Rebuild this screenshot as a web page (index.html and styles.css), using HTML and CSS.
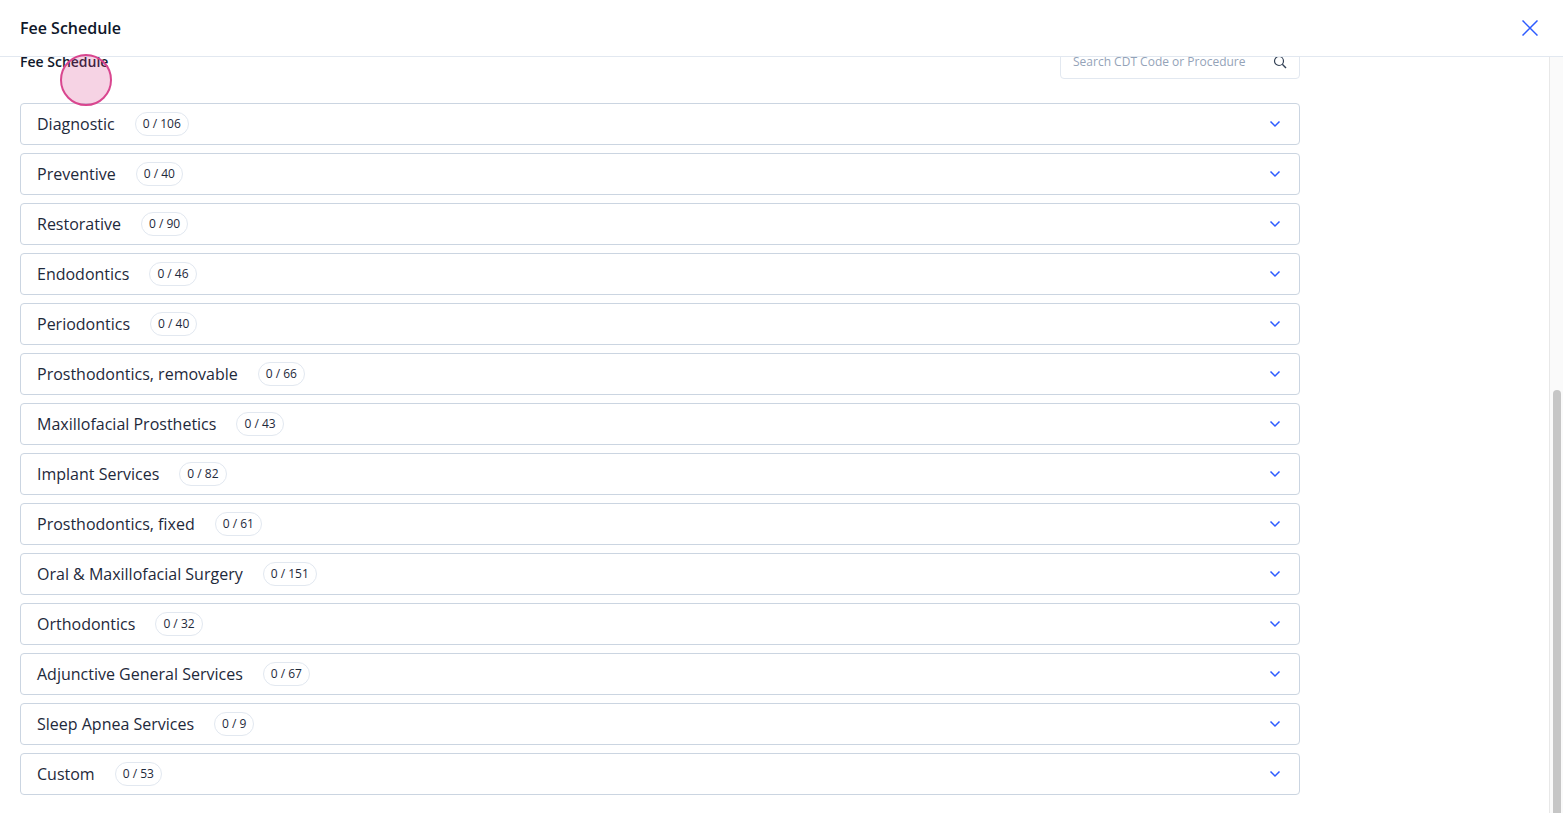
FILE: index.html
```
<!DOCTYPE html>
<html lang="en">
<head>
    <meta charset="UTF-8">
    <meta name="viewport" content="width=device-width, initial-scale=1.0">
    <title>Fee Schedule</title>
    <link rel="stylesheet" href="styles.css">
</head>
<body>
    <svg class="sprite" aria-hidden="true">
        <symbol id="chevron" viewBox="0 0 12 12">
            <path d="M1.5 3.5 L6 8 L10.5 3.5" fill="none" stroke="currentColor" stroke-width="1.5"/>
        </symbol>
    </svg>

    <header class="header">
        <h1>Fee Schedule</h1>
        <button type="button" class="close" aria-label="Close">
            <svg width="16" height="16" viewBox="0 0 16 16"><path d="M0.5 0.5 L15.5 15.5 M15.5 0.5 L0.5 15.5" stroke="currentColor" stroke-width="1.5"/></svg>
        </button>
    </header>

    <div class="body">
        <main class="content">
            <div class="toolbar">
                <h2>Fee Schedule</h2>
                <div class="search">
                    <input type="text" id="search" aria-label="Search CDT Code or Procedure" placeholder="Search CDT Code or Procedure">
                    <svg width="14" height="14" viewBox="0 0 14 14"><circle cx="6" cy="6" r="4.5" fill="none" stroke="currentColor" stroke-width="1.2"/><path d="M9.3 9.3 L13 13" stroke="currentColor" stroke-width="1.4"/></svg>
                </div>
            </div>

            <div class="list">
                <button type="button" class="row" aria-expanded="false"><span>Diagnostic</span><span class="count">0 / 106</span><svg class="chevron"><use href="#chevron"/></svg></button>
                <button type="button" class="row" aria-expanded="false"><span>Preventive</span><span class="count">0 / 40</span><svg class="chevron"><use href="#chevron"/></svg></button>
                <button type="button" class="row" aria-expanded="false"><span>Restorative</span><span class="count">0 / 90</span><svg class="chevron"><use href="#chevron"/></svg></button>
                <button type="button" class="row" aria-expanded="false"><span>Endodontics</span><span class="count">0 / 46</span><svg class="chevron"><use href="#chevron"/></svg></button>
                <button type="button" class="row" aria-expanded="false"><span>Periodontics</span><span class="count">0 / 40</span><svg class="chevron"><use href="#chevron"/></svg></button>
                <button type="button" class="row" aria-expanded="false"><span>Prosthodontics, removable</span><span class="count">0 / 66</span><svg class="chevron"><use href="#chevron"/></svg></button>
                <button type="button" class="row" aria-expanded="false"><span>Maxillofacial Prosthetics</span><span class="count">0 / 43</span><svg class="chevron"><use href="#chevron"/></svg></button>
                <button type="button" class="row" aria-expanded="false"><span>Implant Services</span><span class="count">0 / 82</span><svg class="chevron"><use href="#chevron"/></svg></button>
                <button type="button" class="row" aria-expanded="false"><span>Prosthodontics, fixed</span><span class="count">0 / 61</span><svg class="chevron"><use href="#chevron"/></svg></button>
                <button type="button" class="row" aria-expanded="false"><span>Oral &amp; Maxillofacial Surgery</span><span class="count">0 / 151</span><svg class="chevron"><use href="#chevron"/></svg></button>
                <button type="button" class="row" aria-expanded="false"><span>Orthodontics</span><span class="count">0 / 32</span><svg class="chevron"><use href="#chevron"/></svg></button>
                <button type="button" class="row" aria-expanded="false"><span>Adjunctive General Services</span><span class="count">0 / 67</span><svg class="chevron"><use href="#chevron"/></svg></button>
                <button type="button" class="row" aria-expanded="false"><span>Sleep Apnea Services</span><span class="count">0 / 9</span><svg class="chevron"><use href="#chevron"/></svg></button>
                <button type="button" class="row" aria-expanded="false"><span>Custom</span><span class="count">0 / 53</span><svg class="chevron"><use href="#chevron"/></svg></button>
            </div>
        </main>
        <div class="scrollbar" aria-hidden="true"><div class="thumb"></div></div>
    </div>

    <div class="pointer" aria-hidden="true"></div>
</body>
</html>
```
FILE: styles.css
```
* { box-sizing: border-box; }
body { display: flex; flex-direction: column; height: 100vh; margin: 0; overflow: hidden; background: #fff; color: #1e293b; font-family: "Open Sans", "Noto Sans", sans-serif; }
button, input { font-family: inherit; color: inherit; }
h1, h2 { margin: 0; font-weight: 600; color: #0f172a; }
h1 { font-size: 16px; line-height: 24px; }
h2 { font-size: 14px; line-height: 20px; }
.sprite { position: absolute; width: 0; height: 0; }

.header { display: flex; flex: none; align-items: center; justify-content: space-between; padding: 16px 20px; border-bottom: 1px solid #e2e8f0; }
.close { display: flex; padding: 4px 5px; border: none; background: none; color: #2d5bff; cursor: pointer; }

.body { display: flex; flex: 1; min-height: 0; }
/* scrolled to the end of the list */
.content { display: flex; flex: 1; flex-direction: column; justify-content: flex-end; gap: 24px; padding: 0 20px 18px; overflow: hidden; }
.toolbar, .list { width: 100%; max-width: 1280px; }
.toolbar { display: flex; align-items: center; justify-content: space-between; }
.search { display: flex; align-items: center; width: 240px; height: 34px; padding: 0 12px; border: 1px solid #e2e8f0; border-radius: 4px; }
.search input { flex: 1; min-width: 0; padding: 0; border: none; outline: none; background: none; font-size: 12px; line-height: 16px; }
.search input::placeholder { color: #94a3b8; opacity: 1; }
.search svg { flex: none; color: #334155; }

.list { display: flex; flex-direction: column; gap: 8px; }
.row { display: flex; align-items: center; gap: 20px; height: 42px; padding: 0 18px 0 16px; border: 1px solid #cbd5e1; border-radius: 4px; background: #fff; font-size: 16px; line-height: 24px; text-align: left; cursor: pointer; }
.count { padding: 3px 7px; border: 1px solid #e2e8f0; border-radius: 12px; font-size: 12px; line-height: 16px; white-space: nowrap; }
.chevron { width: 12px; height: 12px; margin-left: auto; color: #2d5bff; }

.scrollbar { display: flex; flex: none; flex-direction: column; justify-content: flex-end; width: 14px; padding: 0 2px 0 3px; border-left: 1px solid #e8e8e8; background: #fafafa; }
.thumb { height: 56%; border-radius: 4px 4px 0 0; background: #c6c6c6; }

.pointer { position: absolute; top: 54px; left: 60px; width: 52px; height: 52px; border: 2px solid #d9468f; border-radius: 50%; background: rgba(217, 70, 143, 0.24); pointer-events: none; }
```
